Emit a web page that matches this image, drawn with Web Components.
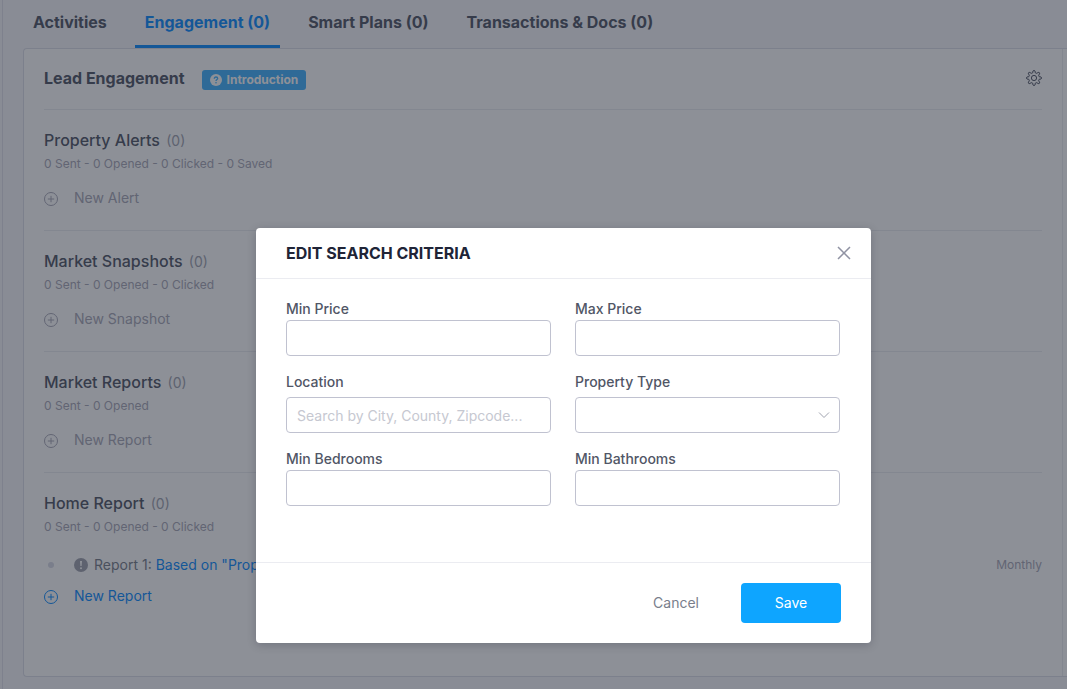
<!DOCTYPE html>
<html lang="en">
<head>
<meta charset="utf-8">
<title>Lead Engagement</title>
<style>
	:root {
		--text:      #515666;
		--title:     #202437;
		--muted:     #a0a3af;
		--soft:      #a8a8b7;
		--line:      #ebecf1;
		--border:    #c6c8d1;
		--link:      #0d8cff;
		--primary:   #0ea5ff;
	}

	html,
	body {
		height: 100%;
	}

	body {
		margin:      0;
		overflow:    hidden;
		color:       var( --text );
		background:  #f6f7fb;
		font-family: Inter, "Liberation Sans", sans-serif;
		font-size:   14px;
		line-height: 20px;
	}
</style>
</head>
<body>

<lead-page>
	<tab-bar slot="tabs">
		<tab-item>Activities</tab-item>
		<tab-item active>Engagement (0)</tab-item>
		<tab-item>Smart Plans (0)</tab-item>
		<tab-item>Transactions &amp; Docs (0)</tab-item>
	</tab-bar>
	<engagement-card>
		<report-section heading="Property Alerts" count="(0)" stats="0 Sent - 0 Opened - 0 Clicked - 0 Saved">
			<add-button>New Alert</add-button>
		</report-section>
		<report-section heading="Market Snapshots" count="(0)" stats="0 Sent - 0 Opened - 0 Clicked">
			<add-button>New Snapshot</add-button>
		</report-section>
		<report-section heading="Market Reports" count="(0)" stats="0 Sent - 0 Opened">
			<add-button>New Report</add-button>
		</report-section>
		<report-section heading="Home Report" count="(0)" stats="0 Sent - 0 Opened - 0 Clicked">
			<report-row label="Report 1:" period="Monthly">Based on "Property Alert"</report-row>
			<add-button active>New Report</add-button>
		</report-section>
	</engagement-card>
</lead-page>

<modal-dialog heading="EDIT SEARCH CRITERIA">
	<form-field label="Min Price"></form-field>
	<form-field label="Max Price"></form-field>
	<form-field label="Location" placeholder="Search by City, County, Zipcode..." spaced></form-field>
	<form-field label="Property Type" kind="select" spaced></form-field>
	<form-field label="Min Bedrooms"></form-field>
	<form-field label="Min Bathrooms"></form-field>
</modal-dialog>

<script>
(function ()
{
	const RESET =
	`
	:host, * { box-sizing: border-box; }
	button {
		margin:     0;
		padding:    0;
		border:     0;
		background: none;
		color:      inherit;
		font:       inherit;
		cursor:     pointer;
	}
	svg { display: block; flex: none; }
	`;

	function define( name, render )
	{
		customElements.define( name, class extends HTMLElement
		{
			constructor()
			{
				super();

				this.attachShadow({ mode: 'open' });
			}

			connectedCallback()
			{
				const { styles, html } = render( this );

				this.shadowRoot.innerHTML = `<style>${ RESET }${ styles }</style>${ html }`;
			}
		});
	}

	// eight teeth, each a rounded run of outer points between two inner ones
	function gearPath()
	{
		const points = [];

		for ( let i = 0; i < 8; i++ )
		{
			[[ -13, 5.4 ], [ -9, 7 ], [ 0, 7.6 ], [ 9, 7 ], [ 13, 5.4 ]].forEach(([ offset, radius ]) =>
			{
				const angle = ( i * 45 + offset ) * Math.PI / 180;

				points.push( `${ ( 8 + radius * Math.sin( angle )).toFixed( 2 ) } ${ ( 8 - radius * Math.cos( angle )).toFixed( 2 ) }` );
			});
		}

		return `M${ points.join( 'L' ) }Z`;
	}

	define( 'lead-page', () => ({
		styles:
		`
		:host {
			display:        flex;
			flex-direction: column;
			height:         100%;
			margin-left:    2px;
			padding:        0 0 12px 20px;
			border-left:    1px solid #e0e1ea;
		}
		`,
		html: `<slot name="tabs"></slot><slot></slot>`,
	}));

	define( 'tab-bar', () => ({
		styles: `:host { display: flex; gap: 18px; flex: none; height: 48px; }`,
		html:   `<slot></slot>`,
	}));

	define( 'tab-item', () => ({
		styles:
		`
		:host { display: flex; }
		button {
			padding:       0 10px 2px;
			border-bottom: 3px solid transparent;
			font-size:     16px;
			font-weight:   700;
		}
		:host([active]) button {
			color:        var( --link );
			border-color: var( --link );
		}
		`,
		html: `<button type="button"><slot></slot></button>`,
	}));

	define( 'engagement-card', () => ({
		styles:
		`
		:host {
			display:       flex;
			flex:          1;
			padding-right: 4px;
			border:        1px solid #dcdee8;
			border-right:  0;
			border-radius: 4px 0 0 4px;
			background:    #fff;
		}
		.inner {
			flex:         1;
			padding:      0 20px;
			border-right: 1px solid var( --line );
		}
		header {
			display:        flex;
			align-items:    center;
			gap:            17px;
			height:         60px;
			padding-bottom: 2px;
		}
		h1 {
			margin:      0;
			font-size:   16px;
			font-weight: 700;
		}
		.intro {
			display:       flex;
			align-items:   center;
			gap:           5px;
			height:        20px;
			margin-top:    4px;
			padding:       0 8px;
			border-radius: 3px;
			background:    #42b2ff;
			color:         #fff;
			font-size:     12px;
			font-weight:   700;
		}
		.settings { margin-left: auto; }
		`,
		html:
		`
		<div class="inner">
			<header>
				<h1>Lead Engagement</h1>
				<button class="intro" type="button">
					<svg width="12" height="12" viewBox="0 0 12 12">
						<circle cx="6" cy="6" r="6" fill="#fff"/>
						<path d="M4.3 4.7C4.3 3.6 5 3 6 3s1.7.6 1.7 1.5C7.7 5.6 6 5.6 6 7" fill="none" stroke="#42b2ff" stroke-width="1.3"/>
						<circle cx="6" cy="8.7" r=".8" fill="#42b2ff"/>
					</svg>
					Introduction
				</button>
				<button class="settings" type="button" aria-label="Settings">
					<svg width="16" height="16" viewBox="0 0 16 16" fill="none" stroke="#515666" stroke-linejoin="round">
						<path d="${ gearPath() }"/>
						<circle cx="8" cy="8" r="2.6"/>
					</svg>
				</button>
			</header>
			<slot></slot>
		</div>
		`,
	}));

	define( 'report-section', $el => ({
		styles:
		`
		:host {
			display:    block;
			padding:    19px 0 22px;
			border-top: 1px solid var( --line );
		}
		h2 {
			margin:      0;
			font-size:   16px;
			font-weight: 500;
			line-height: 22px;
		}
		h2 span {
			margin-left: 2px;
			color:       var( --muted );
			font-size:   14px;
			font-weight: 400;
		}
		p {
			margin:      2px 0 14px;
			color:       var( --soft );
			font-size:   12px;
			line-height: 20px;
		}
		`,
		html:
		`
		<h2>${ $el.getAttribute( 'heading' ) } <span>${ $el.getAttribute( 'count' ) }</span></h2>
		<p>${ $el.getAttribute( 'stats' ) }</p>
		<slot></slot>
		`,
	}));

	define( 'add-button', () => ({
		styles:
		`
		:host {
			display: block;
			color:   var( --soft );
		}
		:host([active]) { color: var( --link ); }
		button {
			display:     flex;
			align-items: center;
			gap:         16px;
			height:      20px;
		}
		svg { margin-top: 2px; }
		`,
		html:
		`
		<button type="button">
			<svg width="14" height="14" viewBox="0 0 14 14" fill="none" stroke="currentColor">
				<circle cx="7" cy="7" r="6.5"/>
				<path d="M7 3.8v6.4M3.8 7h6.4"/>
			</svg>
			<slot></slot>
		</button>
		`,
	}));

	define( 'report-row', $el => ({
		styles:
		`
		:host {
			display:     flex;
			align-items: center;
			height:      20px;
			margin:      18px 0 11px;
		}
		.dot {
			width:         6px;
			height:        6px;
			margin:        0 20px 0 4px;
			border-radius: 50%;
			background:    #d8dae6;
		}
		.label { margin: 0 4px 0 6px; color: #797e8b; }
		a {
			color:           var( --link );
			text-decoration: none;
		}
		.period {
			margin-left: auto;
			color:       var( --soft );
			font-size:   12px;
		}
		`,
		html:
		`
		<span class="dot"></span>
		<svg width="14" height="14" viewBox="0 0 14 14">
			<circle cx="7" cy="7" r="7" fill="#a0a3af"/>
			<path d="M6 3h2l-.4 5H6.4z" fill="#fff"/>
			<circle cx="7" cy="10.2" r="1" fill="#fff"/>
		</svg>
		<span class="label">${ $el.getAttribute( 'label' ) }</span>
		<a href="#"><slot></slot></a>
		<span class="period">${ $el.getAttribute( 'period' ) }</span>
		`,
	}));

	define( 'form-field', $el =>
	{
		const placeholder = $el.getAttribute( 'placeholder' ) || '';

		const $input  = `<input id="control" type="text" placeholder="${ placeholder }">`;
		const $select =
		`
		<select id="control"><option></option></select>
		<svg width="12" height="8" viewBox="0 0 12 8" fill="none" stroke="#a0a3af">
			<path d="M1 1.5l5 5 5-5"/>
		</svg>
		`;

		return {
			styles:
			`
			:host { display: block; }
			label {
				display:     block;
				font-weight: 500;
				line-height: 22px;
			}
			:host([spaced]) label { margin-bottom: 4px; }
			.box {
				display:     grid;
				align-items: center;
			}
			.box > * { grid-area: 1 / 1; }
			input,
			select {
				appearance:    none;
				width:         100%;
				height:        36px;
				padding:       0 10px;
				border:        1px solid #c0c2d0;
				border-radius: 4px;
				background:    #fff;
				color:         inherit;
				font:          inherit;
			}
			input::placeholder { color: var( --border ); }
			svg {
				justify-self:   end;
				margin-right:   10px;
				pointer-events: none;
			}
			`,
			html:
			`
			<label for="control">${ $el.getAttribute( 'label' ) }</label>
			<div class="box">${ $el.getAttribute( 'kind' ) === 'select' ? $select : $input }</div>
			`,
		};
	});

	define( 'modal-dialog', $el => ({
		styles:
		`
		:host {
			position:        absolute;
			inset:           0;
			display:         flex;
			align-items:     center;
			justify-content: center;
			padding:         182px 0 0 60px;
			background:      rgba( 27, 33, 47, .5 );
		}
		section {
			width:         100%;
			max-width:     615px;
			border-radius: 4px;
			background:    #fff;
			box-shadow:    0 2px 10px rgba( 0, 10, 30, .2 );
		}
		header {
			display:         flex;
			align-items:     center;
			justify-content: space-between;
			height:          51px;
			padding:         0 20px 0 30px;
			border-bottom:   1px solid var( --line );
		}
		h2 {
			margin:      0;
			color:       var( --title );
			font-size:   16px;
			font-weight: 700;
		}
		form {
			display:               grid;
			grid-template-columns: repeat( 2, minmax( 0, 265px ));
			gap:                   15px 24px;
			padding:               19px 30px 56px;
		}
		footer {
			display:         flex;
			align-items:     center;
			justify-content: flex-end;
			gap:             42px;
			height:          81px;
			padding:         0 30px;
			border-top:      1px solid var( --line );
		}
		.cancel { color: #797e8b; }
		.save {
			width:         100px;
			height:        40px;
			border-radius: 4px;
			background:    var( --primary );
			color:         #fff;
		}
		`,
		html:
		`
		<section role="dialog" aria-labelledby="heading">
			<header>
				<h2 id="heading">${ $el.getAttribute( 'heading' ) }</h2>
				<button type="button" aria-label="Close">
					<svg width="14" height="14" viewBox="0 0 14 14" stroke="#9093a3" stroke-width="1.5">
						<path d="M1 1l12 12M13 1L1 13"/>
					</svg>
				</button>
			</header>
			<form><slot></slot></form>
			<footer>
				<button class="cancel" type="button">Cancel</button>
				<button class="save" type="button">Save</button>
			</footer>
		</section>
		`,
	}));
})();
</script>
</body>
</html>
